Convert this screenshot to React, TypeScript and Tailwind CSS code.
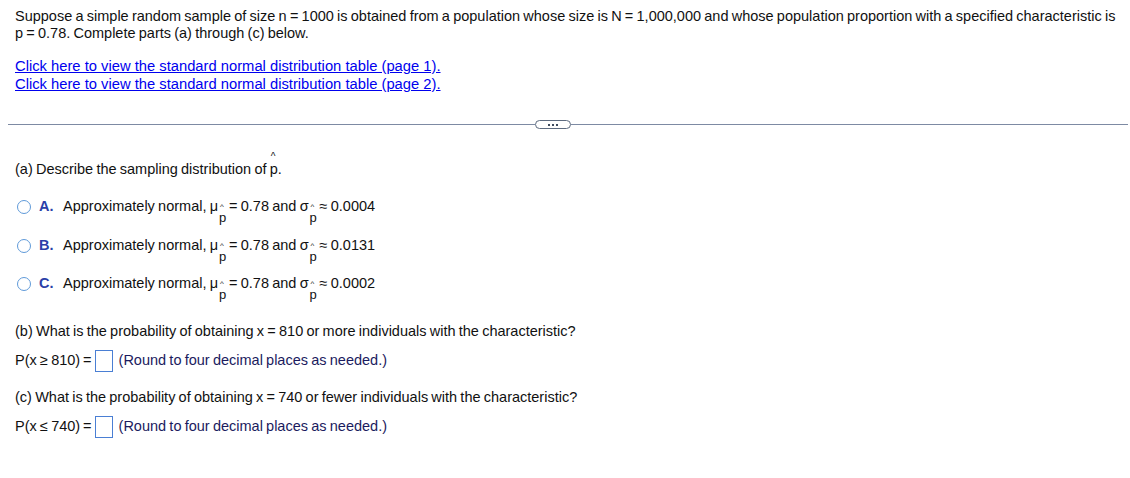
import React from "react";

// μ / σ with a hatted p set as a subscript below the line
function SubHat({ sym }: { sym: string }) {
  return (
    <span className="inline-flex items-baseline">
      <span>{sym}</span>
      <span className="relative inline-block w-[11px]">
        <span className="absolute left-[2px] top-[5px] text-[8px] leading-none">^</span>
        <span className="absolute left-[1px] top-[13px] text-[13px] leading-none">p</span>
        &nbsp;
      </span>
    </span>
  );
}

// p with a hat accent sitting above it
function PHat() {
  return (
    <span className="relative inline-block">
      <span className="absolute left-[1px] top-[-9px] text-[10px] leading-none">^</span>
      p
    </span>
  );
}

function Option({ letter, sigma }: { letter: string; sigma: string }) {
  return (
    <div className="flex items-start h-[38.5px]">
      <span className="mt-[2px] ml-[17px] w-[14px] h-[14px] rounded-full border-[1.5px] border-[#5f9ad9] bg-white" />
      <span className="ml-[8px] w-[24px] font-bold text-[#2b3fa8]">{letter}.</span>
      <span>
        Approximately normal, <SubHat sym="μ" />= 0.78 and <SubHat sym="σ" />≈ {sigma}
      </span>
    </div>
  );
}

function AnswerRow({ label }: { label: string }) {
  return (
    <div className="flex items-center pl-[15px] h-[24px]">
      <span>{label}&thinsp;=</span>
      <span className="ml-[3px] w-[18px] h-[22px] border border-[#4a7fd4] bg-white" />
      <span className="ml-[6px] text-[#1b1b5e]">(Round to four decimal places as needed.)</span>
    </div>
  );
}

export default function App() {
  return (
    <div
      className="w-[1130px] h-[478px] bg-white text-[14.5px] text-[#111] leading-[17px] [word-spacing:-0.8px]"
      style={{ fontFamily: '"Liberation Sans", Arial, sans-serif' }}
    >
      <p className="pt-[8px] pl-[15px] pr-[8px]">
        Suppose a simple random sample of size n = 1000 is obtained from a population whose size is N = 1,000,000 and whose
        population proportion with a specified characteristic is p = 0.78. Complete parts (a) through (c) below.
      </p>
      <div className="pl-[15px] mt-[15px] leading-[18px] text-[14.75px] [word-spacing:0px] text-[#0000ee]">
        <a className="underline block w-fit">Click here to view the standard normal distribution table (page 1).</a>
        <a className="underline block w-fit">Click here to view the standard normal distribution table (page 2).</a>
      </div>

      <div className="flex items-center mt-[27px] pl-[8px]">
        <div className="w-[527px] h-[1px] bg-[#7d8aa3]" />
        <div className="w-[36px] h-[9px] rounded-full border border-[#5d6b80] flex items-center justify-center gap-[2px]">
          <span className="w-[2px] h-[2px] bg-[#3d4a5e]" />
          <span className="w-[2px] h-[2px] bg-[#3d4a5e]" />
          <span className="w-[2px] h-[2px] bg-[#3d4a5e]" />
        </div>
        <div className="flex-1 h-[1px] bg-[#7d8aa3] mr-[2px]" />
      </div>

      <div className="pl-[15px] mt-[32px]">
        (a) Describe the sampling distribution of <PHat />.
      </div>

      <div className="mt-[20px]">
        <Option letter="A" sigma="0.0004" />
        <Option letter="B" sigma="0.0131" />
        <Option letter="C" sigma="0.0002" />
      </div>

      <div className="pl-[15px] mt-[9px]">
        (b) What is the probability of obtaining x = 810 or more individuals with the characteristic?
      </div>
      <div className="mt-[9px]">
        <AnswerRow label="P(x ≥ 810)" />
      </div>
      <div className="pl-[15px] mt-[16px]">
        (c) What is the probability of obtaining x = 740 or fewer individuals with the characteristic?
      </div>
      <div className="mt-[9px]">
        <AnswerRow label="P(x ≤ 740)" />
      </div>
    </div>
  );
}
